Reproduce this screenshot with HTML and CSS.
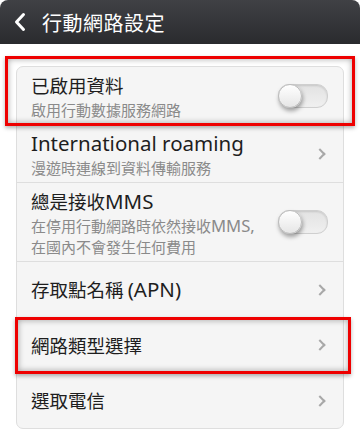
FILE: index.html
```html
<!DOCTYPE html>
<html lang="zh-Hant">
<head>
    <meta charset="UTF-8">
    <meta name="viewport" content="width=device-width, initial-scale=1.0">
    <title>行動網路設定</title>
    <link rel="stylesheet" href="styles.css">
</head>
<body>
    <div class="screen">
        <header class="topbar">
            <svg class="back" width="12" height="20" viewBox="0 0 12 20">
                <path d="M9.5 2.5 L2.5 10 L9.5 17.5" fill="none" stroke="#fff" stroke-width="3" stroke-linecap="round" stroke-linejoin="round"/>
            </svg>
            <h1>行動網路設定</h1>
        </header>

        <main class="content">
            <div class="card">
                <div class="row row-first">
                    <div class="text">
                        <div class="title">已啟用資料</div>
                        <div class="sub">啟用行動數據服務網路</div>
                    </div>
                    <span class="switch"><span class="knob"></span></span>
                </div>
                <div class="row row-roam">
                    <div class="text">
                        <div class="title"><span class="lat">International roaming</span></div>
                        <div class="sub">漫遊時連線到資料傳輸服務</div>
                    </div>
                    <span class="chevron"></span>
                </div>
                <div class="row row-mms">
                    <div class="text">
                        <div class="title">總是接收<span class="lat">MMS</span></div>
                        <div class="sub">在停用行動網路時依然接收<span class="lat">MMS,</span><br>在國內不會發生任何費用</div>
                    </div>
                    <span class="switch"><span class="knob"></span></span>
                </div>
                <div class="row row-apn">
                    <div class="text">
                        <div class="title">存取點名稱 <span class="lat">(APN)</span></div>
                    </div>
                    <span class="chevron"></span>
                </div>
                <div class="row row-type">
                    <div class="text">
                        <div class="title">網路類型選擇</div>
                    </div>
                    <span class="chevron"></span>
                </div>
                <div class="row row-last">
                    <div class="text">
                        <div class="title">選取電信</div>
                    </div>
                    <span class="chevron"></span>
                </div>
            </div>

            <!-- annotation frames drawn over the list -->
            <div class="mark mark-data"></div>
            <div class="mark mark-type"></div>
        </main>
    </div>
</body>
</html>
```

FILE: styles.css
```css
:root {
    --bar-top: #404145;
    --bar-bottom: #2a2b2e;
    --card-bg: #f5f5f5;
    --line: #dedede;
    --title: #1e1e1e;
    --sub: #8a8a8a;
    --mark: #ee0000;
}

body {
    margin: 0;
    padding: 0;
    background-color: #ffffff;
    font-family: "Noto Sans CJK TC", sans-serif;
}

.screen {
    width: 360px;
    height: 432px;
    overflow: hidden;
    background-color: #ffffff;
}

.topbar {
    height: 44px;
    display: flex;
    align-items: center;
    padding-left: 14px;
    background: linear-gradient(to bottom, var(--bar-top), var(--bar-bottom));
    border-radius: 8px 8px 0 0;
}

.topbar .back {
    display: block;
}

.topbar h1 {
    margin: 0 0 0 16px;
    color: #ffffff;
    font-size: 20px;
    font-weight: 400;
    letter-spacing: 0.5px;
}

.content {
    position: relative;
    padding: 22px 16px 0;
}

.card {
    background-color: var(--card-bg);
    border: 1px solid var(--line);
    border-radius: 7px;
}

.row {
    display: flex;
    align-items: center;
    justify-content: space-between;
    padding: 0 15px 0 14px;
    border-bottom: 1px solid var(--line);
    box-sizing: border-box;
}

.row-first { height: 58px; }
.row-roam { height: 58px; }
.row-mms { height: 79px; }
.row-apn { height: 56px; }
.row-type { height: 55px; }
.row-last { height: 55px; border-bottom: none; }

.title {
    color: var(--title);
    font-size: 18.5px;
    line-height: 27px;
}

.sub {
    color: var(--sub);
    font-size: 15px;
    line-height: 21px;
}

/* latin runs are drawn a bit larger than the CJK glyphs */
.lat {
    font-family: "Noto Sans", sans-serif;
    font-size: 1.11em;
}

.title .lat {
    font-size: 20.5px;
}

.switch {
    position: relative;
    flex: none;
    width: 48px;
    height: 22px;
    border-radius: 11px;
    background: linear-gradient(to bottom, #e2e2e2, #f0f0f0);
    border: 1px solid #cfcfcf;
    box-shadow: inset 0 1px 2px rgba(0, 0, 0, 0.12);
}

.knob {
    position: absolute;
    left: -1px;
    top: -1px;
    width: 24px;
    height: 24px;
    border-radius: 50%;
    background: linear-gradient(to bottom, #ffffff, #e6e6e6);
    border: 1px solid #bdbdbd;
    box-shadow: 1px 3px 4px rgba(0, 0, 0, 0.35);
    box-sizing: border-box;
}

.chevron {
    flex: none;
    width: 6px;
    height: 6px;
    margin-right: 4px;
    border-top: 2px solid #a8a8a8;
    border-right: 2px solid #a8a8a8;
    transform: rotate(45deg);
}

.mark {
    position: absolute;
    border: 3px solid var(--mark);
    box-shadow: inset 0 0 6px rgba(0, 0, 0, 0.35), 0 2px 4px rgba(0, 0, 0, 0.3);
    box-sizing: border-box;
}

.mark-data {
    left: 5px;
    top: 12px;
    width: 350px;
    height: 70px;
}

.mark-type {
    left: 15px;
    top: 273px;
    width: 336px;
    height: 57px;
}
```
